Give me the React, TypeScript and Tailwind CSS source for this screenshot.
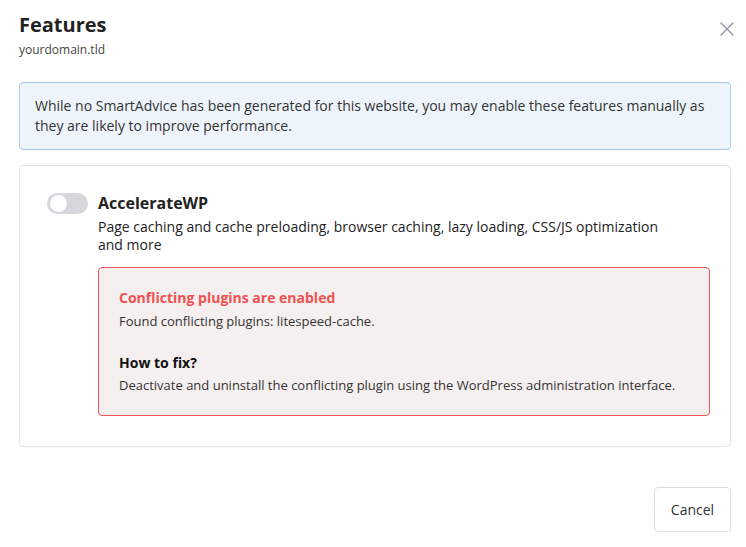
import React from "react";

export default function App() {
  return (
    <div
      className="w-[746px] h-[547px] bg-white text-[#222] relative"
      style={{ fontFamily: '"Open Sans", sans-serif' }}
    >
      <div className="pl-[19px] pr-[15px] pt-[11px]">
        <div className="flex justify-between items-start">
          <div>
            <h1 className="text-[20px] font-bold leading-[28px] text-[#222]">Features</h1>
            <div className="text-[12px] leading-[18px] mt-[2px] text-[#444]">yourdomain.tld</div>
          </div>
          <button className="mt-[10px] mr-[-4px] text-[#9aa3ad]">
            <svg width="16" height="16" viewBox="0 0 16 16" fill="none" stroke="currentColor" strokeWidth="1.6" strokeLinecap="round">
              <path d="M2 2 L14 14 M14 2 L2 14" />
            </svg>
          </button>
        </div>

        <div className="mt-[23px] h-[68px] rounded-[4px] border border-[#a8cbec] bg-[#eef4fb] px-[15px] pt-[13px] text-[14px] leading-[20px] text-[#333]">
          While no SmartAdvice has been generated for this website, you may enable these features manually as they are likely to improve performance.
        </div>

        <div className="mt-[15px] h-[282px] rounded-[4px] border border-[#e2e2ea] pl-[27px] pr-[20px] pt-[26px]">
          <div className="flex gap-[10px]">
            <div className="mt-[1px] w-[41px] h-[21px] rounded-full bg-[#d5d7dc] flex items-center pl-[3px] shrink-0">
              <div className="w-[17px] h-[17px] rounded-full bg-white" />
            </div>
            <div className="flex-1">
              <div className="text-[16px] font-bold leading-[22px] text-[#222]">AccelerateWP</div>
              <div className="mt-[4px] text-[14px] leading-[18px] text-[#222] max-w-[570px]">
                Page caching and cache preloading, browser caching, lazy loading, CSS/JS optimization and more
              </div>
              <div className="mt-[13px] h-[149px] rounded-[4px] border border-[#ee5555] bg-[#f6efef] px-[20px] pt-[20px]">
                <div className="text-[14px] font-bold leading-[20px] text-[#f05252]">Conflicting plugins are enabled</div>
                <div className="mt-[4px] text-[13px] leading-[18px] text-[#333]">Found conflicting plugins: litespeed-cache.</div>
                <div className="mt-[23px] text-[14px] font-bold leading-[20px] text-[#111]">How to fix?</div>
                <div className="mt-[3px] text-[13px] leading-[18px] text-[#333]">
                  Deactivate and uninstall the conflicting plugin using the WordPress administration interface.
                </div>
              </div>
            </div>
          </div>
        </div>

        <div className="flex justify-end mt-[40px]">
          <button className="w-[77px] h-[45px] rounded-[4px] border border-[#dcdce4] bg-white text-[14px] text-[#333]">
            Cancel
          </button>
        </div>
      </div>
    </div>
  );
}
